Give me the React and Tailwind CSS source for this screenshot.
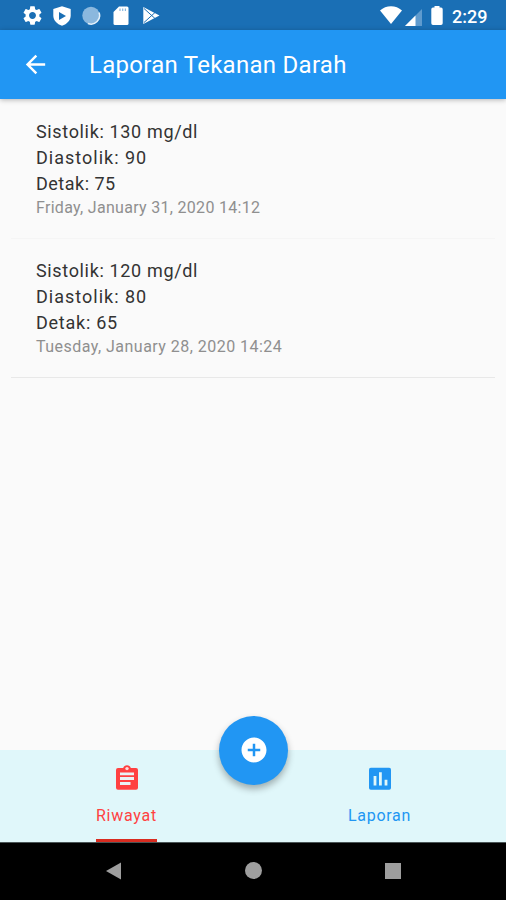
import React, { useState } from 'react';
import { MdSettings, MdArrowBack, MdAddCircle } from 'react-icons/md';

const records = [
    {
        id: 1, sistolik: 130, diastolik: 90, detak: 75, date: 'Friday, January 31, 2020 14:12',
        detakStyle: 'tracking-[0.5px]', dateStyle: 'tracking-[0.3px]', border: 'border-[#f5f5f5]',
    },
    {
        id: 2, sistolik: 120, diastolik: 80, detak: 65, date: 'Tuesday, January 28, 2020 14:24',
        detakStyle: 'tracking-[0.75px]', dateStyle: 'tracking-[0.47px]', border: 'border-[#e8e8e8]',
    },
];

const ShieldIcon = () => (
    <svg width="20" height="20" viewBox="0 0 20 20">
        <path d="M10 0.3 L18.7 3 V9.5 C18.7 14.5 15 18 10 19.8 C5 18 1.3 14.5 1.3 9.5 V3 Z" fill="#fff" />
        <path d="M7 6 L14 10 L7 14 Z" fill="#1a6fb5" />
    </svg>
);

const SyncIcon = () => (
    <svg width="20" height="20" viewBox="0 0 20 20">
        <circle cx="10" cy="9.5" r="8.7" fill="#8bb8de" />
        <path d="M18 6.5 A8.5 8.5 0 0 1 7 17.5" fill="none" stroke="#e3f0fa" strokeWidth="1.5" />
    </svg>
);

const SdCardIcon = () => (
    <svg width="16" height="20" viewBox="0 0 16 20">
        <path d="M6 0.5 H14 Q15.5 0.5 15.5 2 V17.5 Q15.5 19 14 19 H2 Q0.5 19 0.5 17.5 V6 Z" fill="#fff" />
        <path d="M7 2.5 V5 M9.7 2.5 V5 M12.4 2.5 V5" stroke="#8bb8de" strokeWidth="1.2" />
    </svg>
);

const PlayStoreIcon = () => (
    <svg width="20" height="20" viewBox="0 0 20 20">
        <path d="M2.3 1 L18.5 9.5 L2.3 18 Z" fill="#fff" />
        <path d="M3 2.5 L14 12.5 M3 16.5 L14 6.5" stroke="#1a6fb5" strokeWidth="1" />
    </svg>
);

const WifiIcon = () => (
    <svg width="22" height="18" viewBox="0 0 22 18">
        <path d="M0 4.5 C6 -1.2 16 -1.2 22 4.5 L11 18 Z" fill="#fff" />
    </svg>
);

const SignalIcon = () => (
    <svg width="17" height="17" viewBox="0 0 17 17">
        <path d="M17 0 V17 H0 Z" fill="#5f9bce" />
        <path d="M10.5 6.5 V17 H0 Z" fill="#fff" />
    </svg>
);

const BatteryIcon = () => (
    <svg width="12" height="19" viewBox="0 0 12 19">
        <path d="M3.5 0 H8.5 V1.5 H10 Q11.7 1.5 11.7 3.2 V17.2 Q11.7 19 10 19 H2 Q0.3 19 0.3 17.2 V3.2 Q0.3 1.5 2 1.5 H3.5 Z" fill="#fff" />
    </svg>
);

const HistoryIcon = () => (
    <svg width="22" height="25" viewBox="0 0 22 25">
        <path d="M2 3 H7.2 A4 4 0 0 1 14.8 3 H20 Q22 3 22 5 V22.8 Q22 24.8 20 24.8 H2 Q0 24.8 0 22.8 V5 Q0 3 2 3 Z" fill="currentColor" />
        <circle cx="11" cy="3.6" r="1.7" fill="#ffd9da" />
        <path d="M4 8.8 H18 M4 13.5 H18 M4 18.5 H14.5" stroke="#e9f3f5" strokeWidth="2.8" />
    </svg>
);

const ReportIcon = () => (
    <svg width="22" height="25" viewBox="0 0 22 25">
        <rect y="2.8" width="22" height="22" rx="1.8" fill="currentColor" />
        <path d="M6 11 V20.5 M11.4 7.2 V20.5 M17 14.8 V20.5" stroke="#e0f7fa" strokeWidth="2.8" />
    </svg>
);

const StatusBar = () => (
    <div className="flex h-[30px] items-center justify-between bg-[#1a6fb5] pr-[19px] pl-[17.5px] text-white">
        <div className="flex items-center pt-px">
            <span className="flex w-[29.6px] justify-center"><MdSettings size={23} /></span>
            <span className="flex w-[29.6px] justify-center"><ShieldIcon /></span>
            <span className="flex w-[29.6px] justify-center"><SyncIcon /></span>
            <span className="flex w-[29.6px] justify-center"><SdCardIcon /></span>
            <span className="flex w-[29.6px] justify-center"><PlayStoreIcon /></span>
        </div>
        <div className="flex items-center">
            <WifiIcon />
            <span className="ml-[3px] pt-1"><SignalIcon /></span>
            <span className="ml-[9px] pt-px"><BatteryIcon /></span>
            <span className="ml-[9px] w-[35px] pt-0.5 text-[18px] font-medium whitespace-nowrap">2:29</span>
        </div>
    </div>
);

const App = () => {
    const [tab, setTab] = useState('riwayat');

    return (
        <div className="flex h-[900px] w-[506px] flex-col overflow-hidden bg-[#fafafa] font-['Roboto',sans-serif]">
            <StatusBar />
            <header className="z-10 flex h-[69px] items-center bg-[#2196f3] text-white shadow-[0_1px_5px_rgba(0,0,0,0.28)]">
                <button className="ml-[20.5px]">
                    <MdArrowBack size={29} />
                </button>
                <h1 className="ml-[39.5px] text-[24px] tracking-[0.27px] whitespace-nowrap">Laporan Tekanan Darah</h1>
            </header>

            {/* Blood pressure history */}
            <main className="flex-1 px-[11px] pt-px">
                {records.map(item => (
                    <div key={item.id} className={`h-[139px] border-b pt-[19px] pl-[25px] ${item.border}`}>
                        <div className="text-[18px] leading-[26px] text-[#333]">
                            <p className="tracking-[0.65px]">Sistolik: {item.sistolik} mg/dl</p>
                            <p className="tracking-[1px]">Diastolik: {item.diastolik}</p>
                            <p className={item.detakStyle}>Detak: {item.detak}</p>
                        </div>
                        <p className={`text-base leading-[22px] text-[#8f8f8f] ${item.dateStyle}`}>{item.date}</p>
                    </div>
                ))}
            </main>

            {/* Bottom tabs */}
            <nav className="relative flex h-[92px] bg-[#e0f7fa]">
                <button onClick={() => setTab('riwayat')} className="flex flex-1 flex-col items-center pt-[15px] text-[#ff4141]">
                    <HistoryIcon />
                    <span className="mt-3.5 text-base leading-[24px] tracking-[0.75px]">Riwayat</span>
                    {tab === 'riwayat' && <span className="mt-auto h-[3px] w-[61px] bg-[#d92c20]" />}
                </button>
                <button onClick={() => setTab('laporan')} className="flex flex-1 flex-col items-center pt-[15px] text-[#2196f3]">
                    <ReportIcon />
                    <span className="mt-3.5 text-base leading-[24px] tracking-[0.7px]">Laporan</span>
                    {tab === 'laporan' && <span className="mt-auto h-[3px] w-[61px] bg-[#2196f3]" />}
                </button>
                <button className="absolute -top-[34px] left-[219px] flex size-[69px] items-center justify-center rounded-full bg-[#2196f3] pb-px text-white shadow-[0_4px_7px_rgba(0,0,0,0.3)]">
                    <MdAddCircle size={30} />
                </button>
            </nav>

            {/* Android navigation */}
            <div className="flex h-[58px] items-center justify-center gap-[123px] border-t border-[#4a5556] bg-black pb-0.5">
                <svg width="16" height="18" viewBox="0 0 16 18">
                    <path d="M15 0.5 V17.5 L0 9 Z" fill="#9e9e9e" />
                </svg>
                <span className="size-[17px] rounded-full bg-[#9e9e9e]" />
                <span className="size-4 bg-[#9e9e9e]" />
            </div>
        </div>
    );
};

export default App;
